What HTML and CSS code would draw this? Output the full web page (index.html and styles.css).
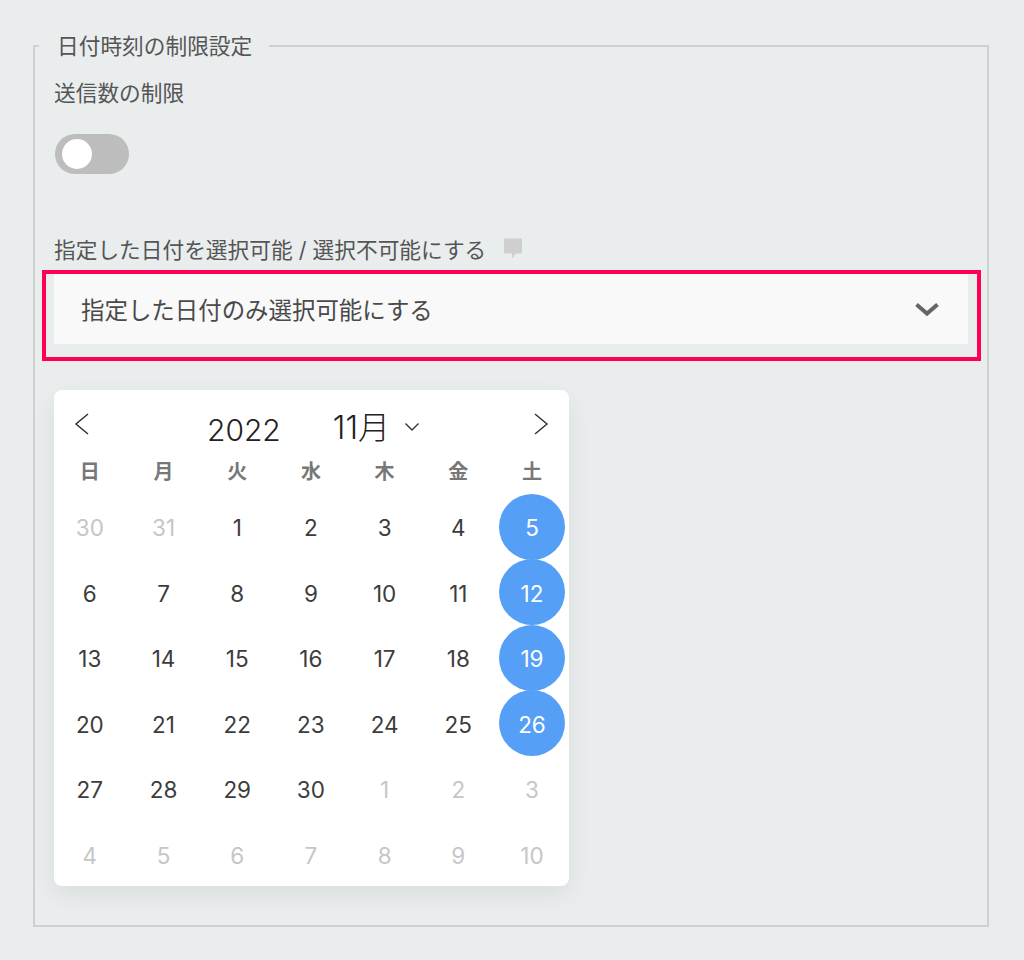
FILE: index.html
```html
<!DOCTYPE html>
<html lang="ja">
<head>
<meta charset="utf-8">
<title>日付時刻の制限設定</title>
<link rel="stylesheet" href="styles.css">
</head>
<body>
<fieldset class="panel">
  <legend class="panel-title">日付時刻の制限設定</legend>
  <div class="field-label first">送信数の制限</div>
  <div class="toggle"><span class="knob"></span></div>
  <div class="field-label with-help">指定した日付を選択可能 / 選択不可能にする
    <svg class="help" width="20" height="22" viewBox="0 0 20 22"><path d="M1 2.5a1 1 0 0 1 1-1h16a1 1 0 0 1 1 1v13a1 1 0 0 1-1 1h-5l-4 5v-5H2a1 1 0 0 1-1-1z" fill="#cfcfcf"/></svg>
  </div>
  <div class="highlight">
    <div class="select">
      <span>指定した日付のみ選択可能にする</span>
      <svg width="26" height="16" viewBox="0 0 26 16"><path d="M2.5 3.5 13 12.5 23.5 3.5" fill="none" stroke="#666" stroke-width="4"/></svg>
    </div>
  </div>
  <div class="calendar">
    <div class="cal-head">
      <svg class="nav" width="16" height="24" viewBox="0 0 16 24"><path d="M14 2 2 12l12 10" fill="none" stroke="#333" stroke-width="1.5"/></svg>
      <div class="cal-title">
        <span class="year">2022</span>
        <span class="month">11月</span>
        <svg width="16" height="10" viewBox="0 0 16 10"><path d="M1.5 1.5 8 8l6.500-6.500" fill="none" stroke="#333" stroke-width="1.400"/></svg>
      </div>
      <svg class="nav" width="16" height="24" viewBox="0 0 16 24"><path d="M2 2l12 10L2 22" fill="none" stroke="#333" stroke-width="1.5"/></svg>
    </div>
    <div class="weekdays"><span>日</span><span>月</span><span>火</span><span>水</span><span>木</span><span>金</span><span>土</span></div>
    <div class="days">
      <span class="muted">30</span><span class="muted">31</span><span>1</span><span>2</span><span>3</span><span>4</span><span class="on">5</span>
      <span>6</span><span>7</span><span>8</span><span>9</span><span>10</span><span>11</span><span class="on">12</span>
      <span>13</span><span>14</span><span>15</span><span>16</span><span>17</span><span>18</span><span class="on">19</span>
      <span>20</span><span>21</span><span>22</span><span>23</span><span>24</span><span>25</span><span class="on">26</span>
      <span>27</span><span>28</span><span>29</span><span>30</span><span class="muted">1</span><span class="muted">2</span><span class="muted">3</span>
      <span class="muted">4</span><span class="muted">5</span><span class="muted">6</span><span class="muted">7</span><span class="muted">8</span><span class="muted">9</span><span class="muted">10</span>
    </div>
  </div>
</fieldset>
</body>
</html>
```
FILE: styles.css
```css
* { box-sizing: border-box; }
html, body { margin: 0; height: 960px; overflow: hidden; }
body {
  background: #e9edee;
  padding: 32px 35px 0 33px;
  font-family: Inter, "Noto Sans CJK JP", sans-serif;
  color: #555;
}
.panel {
  margin: 0;
  min-width: 0;
  height: 895px;
  border: 2px solid #cfd1d1;
  padding: 0 7px 0 18px;
}
.panel-title {
  margin-left: -14px;
  padding: 0 17px 0 18px;
  font-size: 21.7px;
  line-height: 28px;
  color: #555;
}
.field-label {
  padding-left: 1px;
  font-size: 21.7px;
  line-height: 28px;
  color: #555;
}
.first { margin-top: 19px; }
.toggle {
  margin: 27px 0 0 2px;
  width: 74px;
  height: 40px;
  border-radius: 20px;
  background: #bdbdbd;
  padding: 5px 7px;
}
.knob {
  display: block;
  width: 30px;
  height: 30px;
  border-radius: 50%;
  background: #fff;
}
.with-help {
  margin-top: 62px;
  display: flex;
  align-items: center;
  gap: 17px;
  height: 28px;
}
.help { margin-top: -4px; }
.highlight {
  margin: 6px 0 0 -11px;
  width: 939px;
  height: 91px;
  border: 4px solid #ff0055;
  padding: 0 9px 13px 8px;
}
.select {
  height: 70px;
  background: #f9f9f9;
  padding: 0 28px 0 27px;
  display: flex;
  justify-content: space-between;
  align-items: center;
  font-size: 23.45px;
  color: #4a4a4a;
}
.calendar {
  margin: 29px 0 0 1px;
  width: 515px;
  height: 496px;
  background: #fff;
  border-radius: 8px;
  box-shadow: 0 8px 24px rgba(0, 0, 0, 0.07);
}
.cal-head {
  height: 66px;
  padding: 22px 20px 0;
  display: flex;
  justify-content: space-between;
  align-items: flex-start;
}
.cal-title {
  display: flex;
  align-items: center;
  height: 34px;
  margin-left: 4px;
  font-size: 30px;
  font-weight: 300;
  color: #222;
}
.year { margin-top: 1px; }
.month { margin-left: 52px; font-size: 32px; margin-top: -8px; }
.cal-title svg { margin-left: 14px; margin-top: -5px; }
.weekdays, .days {
  display: grid;
  grid-template-columns: repeat(7, 73.7px);
  justify-items: center;
  margin-left: -1px;
}
.weekdays {
  height: 22px;
  align-items: center;
  font-size: 20px;
  font-weight: 700;
  color: #777;
}
.days {
  margin-top: 16px;
  grid-auto-rows: 65.5px;
  align-items: center;
  font-size: 22.5px;
  color: #3c3c3c;
}
.days span {
  width: 66px;
  height: 66px;
  border-radius: 50%;
  display: flex;
  align-items: center;
  justify-content: center;
  padding-top: 2px;
}
.days .muted { color: #c6c6c6; }
.days .on { background: #569ff7; color: #fff; }
```
